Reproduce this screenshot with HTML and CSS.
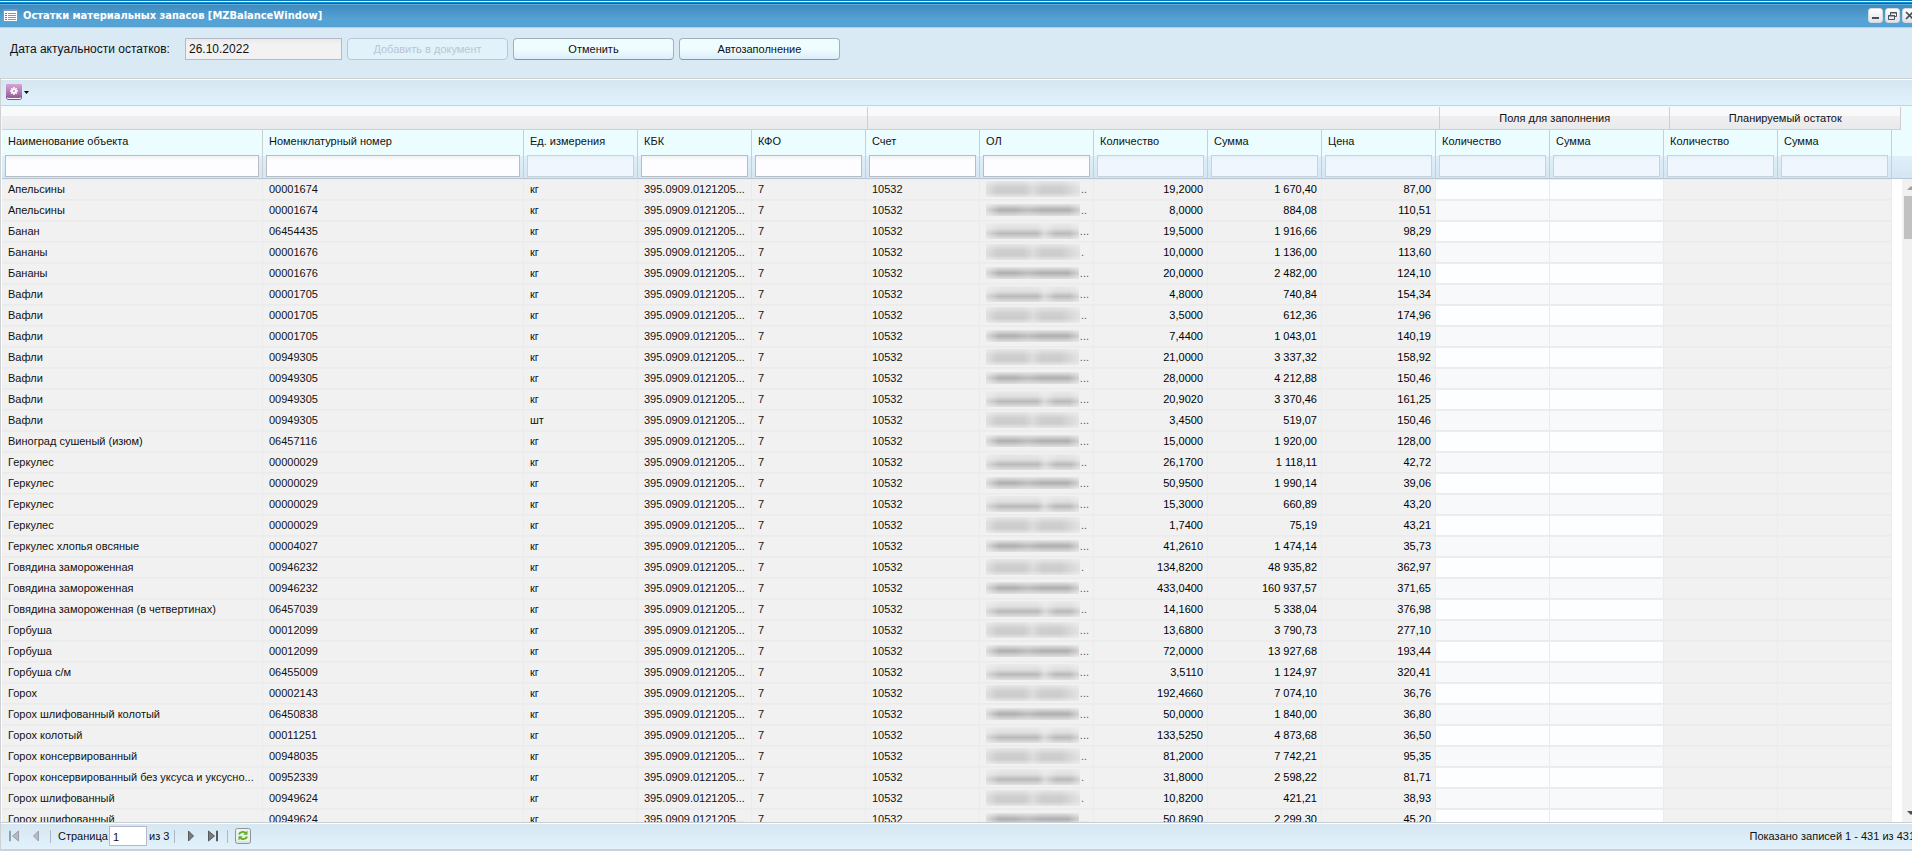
FILE: index.html
```
<!DOCTYPE html>
<html lang="ru">
<head>
<meta charset="utf-8">
<title>Остатки материальных запасов</title>
<link rel="stylesheet" href="styles.css">
</head>
<body>
<div class="window">
  <header class="titlebar">
    <svg class="title-icon" width="15" height="13" viewBox="0 0 15 13">
      <rect width="15" height="13" fill="#7f93c8"/><rect x="1" y="2" width="13" height="10" fill="#fff"/>
      <path d="M2 4.500h2M2 6.500h2M2 8.500h2M2 10.500h2" stroke="#5f7ab8"/><path d="M5 4.500h8M5 6.500h8M5 8.500h8M5 10.500h8" stroke="#8d929c"/>
    </svg>
    <h1 class="title">Остатки материальных запасов [MZBalanceWindow]</h1>
    <div class="tools">
      <button class="tool" aria-label="Свернуть"><svg width="13" height="13" viewBox="0 0 13 13"><path d="M3 9h7" stroke="#4a5058" stroke-width="2"/></svg></button>
      <button class="tool" aria-label="Восстановить"><svg width="13" height="13" viewBox="0 0 13 13" fill="none" stroke="#4a5058"><path d="M4.500 6V3.500h6v4H8.500M4 4h7"/><path d="M2.500 6.500h6v4h-6zM2 7h7"/></svg></button>
      <button class="tool" aria-label="Закрыть"><svg width="13" height="13" viewBox="0 0 13 13"><path d="M3 3l7 7M10 3l-7 7" stroke="#4a5058" stroke-width="1.600"/></svg></button>
    </div>
  </header>

  <form class="form">
    <label class="form-label" for="date">Дата актуальности остатков:</label>
    <input class="date" id="date" type="text" value="26.10.2022" readonly>
    <button class="btn" type="button" disabled>Добавить в документ</button>
    <button class="btn" type="button">Отменить</button>
    <button class="btn" type="button">Автозаполнение</button>
  </form>

  <main class="grid">
    <div class="toolbar">
      <button class="menu-btn" aria-label="Настройки">
        <svg width="24" height="16" viewBox="0 0 24 16">
          <defs><linearGradient id="g" x2="0" y2="1"><stop stop-color="#d9a5d8"/><stop offset="1" stop-color="#935a9a"/></linearGradient></defs>
          <rect width="16" height="16" rx="3" fill="#805184"/><rect x="1" y="12" width="14" height="3" rx="1" fill="#fff"/><rect width="16" height="14" rx="3" fill="url(#g)"/>
          <g stroke="#fff" stroke-width="1.500"><path d="M8 3v8M4 7h8M5.200 4.200l5.600 5.600M10.800 4.200l-5.600 5.600"/></g><circle cx="8" cy="7" r="2.500" fill="#fff"/><circle cx="8" cy="7" r="1" fill="#b57cb8"/>
          <path d="M18 7h5l-2.500 3z" fill="#000"/>
        </svg>
      </button>
    </div>
    <div class="groups">
      <div class="group group-main"></div>
      <div class="group group-account"></div>
      <div class="group group-pair">Поля для заполнения</div>
      <div class="group group-pair">Планируемый остаток</div>
    </div>
    <div class="view">
      <table class="table">
        <colgroup><col class="col-wide"><col class="col-wide"><col span="12"></colgroup>
        <thead><tr id="head"></tr></thead>
        <tbody id="rows"></tbody>
      </table>
      <div class="rail">
        <div class="rail-head"></div>
        <div class="scroll">
          <svg class="arrow" width="17" height="17" viewBox="0 0 17 17"><path d="M5 11h8l-4-4z" fill="#a3a3a3"/></svg>
          <div class="thumb"></div>
          <svg class="arrow" width="17" height="17" viewBox="0 0 17 17"><path d="M5 6h8l-4 4z" fill="#505050"/></svg>
        </div>
      </div>
    </div>
    <footer class="pager">
      <button class="page-btn" aria-label="Первая" disabled><svg width="12" height="12" viewBox="0 0 12 12" fill="#b5bac0" stroke="#9aa0a8"><path d="M1.500 1v10h1V1zM10.500 1v10l-6-5z"/></svg></button>
      <button class="page-btn" aria-label="Предыдущая" disabled><svg width="12" height="12" viewBox="0 0 12 12" fill="#b5bac0" stroke="#9aa0a8"><path d="M8.500 1v10l-5-5z"/></svg></button>
      <span class="sep"></span>
      <label class="page-label" for="page">Страница</label>
      <input class="page" id="page" type="text" value="1">
      <span class="page-total">из 3</span>
      <span class="sep"></span>
      <button class="page-btn" aria-label="Следующая"><svg width="12" height="12" viewBox="0 0 12 12" fill="#777c80" stroke="#555a5e"><path d="M3.500 1v10l5-5z"/></svg></button>
      <button class="page-btn" aria-label="Последняя"><svg width="12" height="12" viewBox="0 0 12 12" fill="#777c80" stroke="#555a5e"><path d="M1.500 1v10l6-5zM9.500 1v10h1V1z"/></svg></button>
      <span class="sep"></span>
      <button class="refresh" aria-label="Обновить"><svg width="16" height="16" viewBox="0 0 16 16" fill="none">
        <rect x=".5" y=".5" width="15" height="15" rx="2" fill="#dfe3e6" stroke="#8f9499"/><rect x="1" y="1" width="14" height="12" rx="2" fill="#eef2ee"/>
        <path d="M4 6.500c.6-2.500 4.500-3.500 6.500-1.500M12 8.500c-.6 2.500-4.500 3.500-6.500 1.500" stroke="#5fae2c" stroke-width="1.800"/><path d="M12.500 2.500v4.200H8.300zM3.500 12.500V8.300h4.200z" fill="#5fae2c"/></svg></button>
      <span class="info">Показано записей 1 - 431 из 431</span>
    </footer>
  </main>
</div>
<script src="grid.js"></script>
</body>
</html>
```
FILE: styles.css
```
* { box-sizing: border-box; }
body {
  margin: 0;
  height: 100vh;
  overflow: hidden;
  font: 11px/13px "Liberation Sans", Arial, sans-serif;
  color: #111;
}
button, input { font: inherit; color: inherit; }
button { padding: 0; border: 0; background: none; }
svg { display: block; }

.window {
  display: flex;
  flex-direction: column;
  width: calc(100% + 7px);
  height: 100vh;
  background: #daeaf5;
}

.titlebar {
  display: flex;
  align-items: center;
  gap: 5px;
  flex: none;
  height: 28px;
  padding: 4px 2px 0 3px;
  border-bottom: 1px solid #c3ccd3;
  background:
    linear-gradient(#0a74b5 0 1px, #e8f6ff 1px 2px, #0090d8 2px 3px, #155f92 3px 4px, #63a9d6 4px 5px, #3f8bbd 5px, #55a2d5 19px);
}
.title {
  margin: 0;
  font: bold 11px/14px "DejaVu Sans Condensed", "DejaVu Sans", sans-serif;
  color: #fff;
}
.tools { display: flex; gap: 2px; margin-left: auto; }
.tool {
  width: 15px;
  height: 15px;
  border: 1px solid #d3d9de;
  border-radius: 3px;
  background: linear-gradient(#fff, #dfe3ea);
}

.form {
  display: flex;
  align-items: flex-start;
  gap: 5px;
  flex: none;
  height: 50px;
  padding: 10px;
}
.form-label { width: 170px; font-size: 12px; line-height: 22px; white-space: nowrap; }
.date {
  width: 157px;
  height: 22px;
  padding: 0 3px;
  border: 1px solid #b5b8c8;
  background: linear-gradient(#e9e9ea, #f2f2f2 5px);
  font-size: 12px;
}
.btn {
  width: 161px;
  height: 22px;
  border: 1px solid #9fb1bf;
  border-bottom-color: #8496a4;
  border-radius: 4px;
  background: linear-gradient(#effdff 0 50%, #dcedfa);
}
.btn:disabled { border-color: #b4cad8; background: #e1f2fb; color: #bcc6cf; }

.grid {
  display: flex;
  flex-direction: column;
  flex: 1;
  min-height: 0;
  border-left: 1px solid #cfd2d5;
  border-top: 1px solid #cacfd4;
  border-bottom: 2px solid #cfd0d3;
}
.toolbar {
  flex: none;
  height: 27px;
  padding: 4px 5px;
  border-top: 1px solid #fff;
  border-bottom: 1px solid #c5d2da;
  background: linear-gradient(#d5e6f1, #e1f2fd);
}

.groups {
  display: flex;
  flex: none;
  height: 24px;
  padding: 1px 18px 0 1px;
  background: #ebfdff;
}
.group {
  flex: 230 1 0;
  border-right: 1px solid #cfcfd0;
  border-bottom: 1px solid #d0d0d0;
  background: linear-gradient(#f9f9f9 0 9px, #efeff0 9px, #e9eaec);
  line-height: 22px;
  text-align: center;
}
.group-main { flex-grow: 867; }
.group-account { flex-grow: 572; }

.view {
  display: flex;
  align-items: flex-start;
  flex: 1;
  min-height: 0;
  padding-left: 1px;
  overflow: hidden;
  background: #fff;
}
.table {
  flex: 1;
  width: 0;
  table-layout: fixed;
  border-spacing: 0;
}
.col-wide { width: 261px; }
.head, .rail-head {
  height: 49px;
  border-bottom: 1px solid #b5c7d6;
  background: linear-gradient(#ebfdff 0 26px, #e0effa 26px, #d5e6f2);
}
.head {
  padding: 0 3px 1px 3px;
  border-right: 1px solid #cbcdd0;
  font-weight: normal;
  text-align: left;
  vertical-align: top;
}
.head-label { display: block; padding: 5px 3px 7px; }
.filter {
  display: block;
  width: 100%;
  height: 22px;
  border: 1px solid #b9bcc0;
  background: linear-gradient(#f0f2f4, #fdfdff 4px);
}
.filter:disabled { border-color: #c8d2d9; background: linear-gradient(#e6f0f8, #eff6fe 4px); }

.cell {
  height: 21px;
  padding: 0 4px 1px 6px;
  border-right: 1px solid #ebebeb;
  border-top: 1px solid #ededed;
  border-bottom: 1px solid #ebebeb;
  background: #f1f1f1;
  line-height: 18px;
  white-space: nowrap;
}
.num { text-align: right; color: #000; }
.edit { background: #fdfeff; }
tr:nth-child(even) .edit { background: #f7f9fb; }

.hidden-name { display: flex; align-items: center; gap: 1px; height: 18px; color: #55557f; }
.smudge {
  width: 94px;
  height: 16px;
  background:
    linear-gradient(90deg, #f1f1f188, #f1f1f100 12% 40%, #f1f1f166 50%, #f1f1f100 60% 80%, #f1f1f199),
    linear-gradient(#e6e6e6, #cfcfcf 40%, #cccccc 70%, #e4e4e4);
}
.smudge-dark {
  height: 12px;
  background:
    linear-gradient(90deg, #f1f1f1aa, #f1f1f100 14% 30%, #f1f1f133 45%, #f1f1f100 60% 88%, #f1f1f188),
    linear-gradient(#e4e4e4, #aeaeb0 50%, #dfdfdf);
}
.smudge-low {
  background:
    linear-gradient(90deg, #f1f1f199, #f1f1f100 14% 55%, #f1f1f188 63%, #f1f1f100 75% 90%, #f1f1f188),
    linear-gradient(#ebebeb, #dedede 35%, #bababc 65%, #e0e0e0);
}

.rail { display: flex; flex-direction: column; width: 27px; height: 100%; }
.rail-head { flex: none; }
.scroll {
  display: flex;
  flex-direction: column;
  flex: 1;
  width: 17px;
  margin-left: 10px;
  background: #f1f1f1;
}
.thumb { height: 43px; margin: 0 2px auto; background: #c1c1c1; }

.pager {
  display: flex;
  align-items: center;
  flex: none;
  height: 27px;
  padding: 0 4px 0 7px;
  border-top: 1px solid #c8cdd1;
  background: linear-gradient(#fff 0 1px, #d6e7f2 1px, #e1f2fd);
}
.page-btn { width: 12px; margin-right: 10px; }
.page-btn + .sep { margin-left: -2px; }
.sep { width: 1px; height: 13px; margin-right: 7px; background: #a9b8c3; }
.page-label { width: 51px; }
.page { width: 38px; height: 20px; margin-right: 2px; padding: 2px 3px 0; border: 1px solid #b5b8c8; background: #fff; }
.page-total { width: 25px; }
.page-total + .sep { margin-right: 10px; }
.info { margin-left: auto; white-space: nowrap; }
```
FILE: grid.js
```
const columns = [
  ["Наименование объекта", true], ["Номенклатурный номер", true], ["Ед. измерения", false],
  ["КБК", true], ["КФО", true], ["Счет", true], ["ОЛ", true],
  ["Количество", false], ["Сумма", false], ["Цена", false],
  ["Количество", false], ["Сумма", false], ["Количество", false], ["Сумма", false]
];

// name | number | quantity | sum | price | dots | smudge kind
const records = `Апельсины|00001674|19,2000|1 670,40|87,00|..|
Апельсины|00001674|8,0000|884,08|110,51|..|dark
Банан|06454435|19,5000|1 916,66|98,29|...|low
Бананы|00001676|10,0000|1 136,00|113,60|.|
Бананы|00001676|20,0000|2 482,00|124,10|...|dark
Вафли|00001705|4,8000|740,84|154,34|...|low
Вафли|00001705|3,5000|612,36|174,96|..|
Вафли|00001705|7,4400|1 043,01|140,19|...|dark
Вафли|00949305|21,0000|3 337,32|158,92|...|
Вафли|00949305|28,0000|4 212,88|150,46|...|dark
Вафли|00949305|20,9020|3 370,46|161,25|...|low
Вафли|00949305|3,4500|519,07|150,46|...|
Виноград сушеный (изюм)|06457116|15,0000|1 920,00|128,00|...|dark
Геркулес|00000029|26,1700|1 118,11|42,72|..|low
Геркулес|00000029|50,9500|1 990,14|39,06|...|dark
Геркулес|00000029|15,3000|660,89|43,20|...|low
Геркулес|00000029|1,7400|75,19|43,21|..|
Геркулес хлопья овсяные|00004027|41,2610|1 474,14|35,73|...|dark
Говядина замороженная|00946232|134,8200|48 935,82|362,97|.|
Говядина замороженная|00946232|433,0400|160 937,57|371,65|...|dark
Говядина замороженная (в четвертинах)|06457039|14,1600|5 338,04|376,98|..|low
Горбуша|00012099|13,6800|3 790,73|277,10|...|
Горбуша|00012099|72,0000|13 927,68|193,44|...|dark
Горбуша с/м|06455009|3,5110|1 124,97|320,41|...|low
Горох|00002143|192,4660|7 074,10|36,76|...|
Горох шлифованный колотый|06450838|50,0000|1 840,00|36,80|...|dark
Горох колотый|00011251|133,5250|4 873,68|36,50|...|low
Горох консервированный|00948035|81,2000|7 742,21|95,35|..|
Горох консервированный без уксуса и уксусно...|00952339|31,8000|2 598,22|81,71|.|low
Горох шлифованный|00949624|10,8200|421,21|38,93|.|
Горох шлифованный|00949624|50,8690|2 299,30|45,20|...|dark`.split("\n").map(line => line.split("|"));

document.getElementById("head").innerHTML = columns.map(([name, enabled], i) =>
  `<th class="head"><label class="head-label" for="f${i}">${name}</label><input class="filter" id="f${i}" type="text"${enabled ? "" : " disabled"}></th>`
).join("");

document.getElementById("rows").innerHTML = records.map(([name, number, quantity, sum, price, dots, kind], i) => {
  const text = value => `<td class="cell">${value}</td>`;
  const num = value => `<td class="cell num">${value}</td>`;
  const owner = `<td class="cell"><div class="hidden-name"><span class="smudge smudge-${kind}"></span>${dots}</div></td>`;
  const unit = i === 11 ? "шт" : "кг";
  return "<tr>" + [name, number, unit, "395.0909.0121205...", "7", "10532"].map(text).join("") + owner
    + [quantity, sum, price].map(num).join("")
    + '<td class="cell edit"></td>'.repeat(2) + '<td class="cell"></td>'.repeat(2) + "</tr>";
}).join("");
```
